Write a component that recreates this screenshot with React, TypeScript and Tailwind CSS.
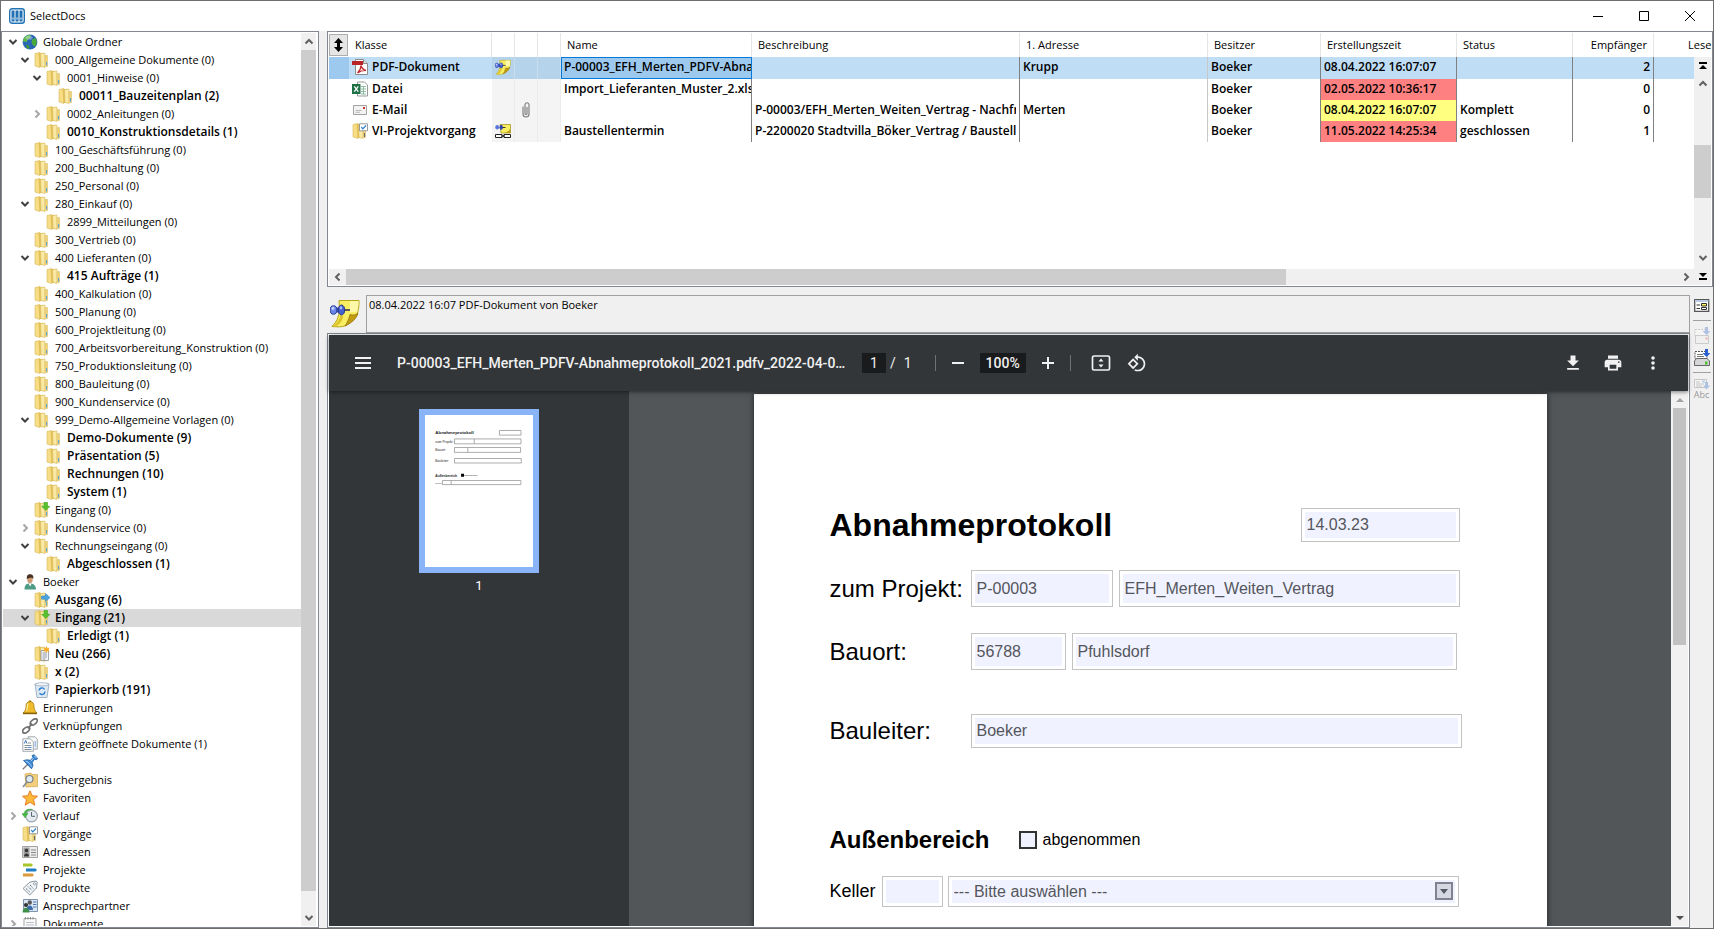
import { useState } from 'react'
import type { ReactNode } from 'react'
import { clsx } from 'clsx'

type IconName =
  | 'folder' | 'folderIn' | 'folderOut' | 'folderNew' | 'folderTask' | 'globe' | 'user' | 'trash'
  | 'bell' | 'link' | 'docs' | 'pin' | 'search' | 'star' | 'history' | 'card' | 'bars' | 'tag'
  | 'people' | 'notepad' | 'pdf' | 'excel' | 'mail' | 'note' | 'noteLink' | 'clip'

type TreeNode = {
  label: string
  level: number
  icon: IconName
  open?: boolean
  closed?: boolean
  bold?: boolean
}

const TREE: TreeNode[] = [
  { label: 'Globale Ordner', level: 0, icon: 'globe', open: true },
  { label: '000_Allgemeine Dokumente (0)', level: 1, icon: 'folder', open: true },
  { label: '0001_Hinweise (0)', level: 2, icon: 'folder', open: true },
  { label: '00011_Bauzeitenplan (2)', level: 3, icon: 'folder', bold: true },
  { label: '0002_Anleitungen (0)', level: 2, icon: 'folder', closed: true },
  { label: '0010_Konstruktionsdetails (1)', level: 2, icon: 'folder', bold: true },
  { label: '100_Geschäftsführung (0)', level: 1, icon: 'folder' },
  { label: '200_Buchhaltung (0)', level: 1, icon: 'folder' },
  { label: '250_Personal (0)', level: 1, icon: 'folder' },
  { label: '280_Einkauf (0)', level: 1, icon: 'folder', open: true },
  { label: '2899_Mitteilungen (0)', level: 2, icon: 'folder' },
  { label: '300_Vertrieb (0)', level: 1, icon: 'folder' },
  { label: '400 Lieferanten (0)', level: 1, icon: 'folder', open: true },
  { label: '415 Aufträge (1)', level: 2, icon: 'folder', bold: true },
  { label: '400_Kalkulation (0)', level: 1, icon: 'folder' },
  { label: '500_Planung (0)', level: 1, icon: 'folder' },
  { label: '600_Projektleitung (0)', level: 1, icon: 'folder' },
  { label: '700_Arbeitsvorbereitung_Konstruktion (0)', level: 1, icon: 'folder' },
  { label: '750_Produktionsleitung (0)', level: 1, icon: 'folder' },
  { label: '800_Bauleitung (0)', level: 1, icon: 'folder' },
  { label: '900_Kundenservice (0)', level: 1, icon: 'folder' },
  { label: '999_Demo-Allgemeine Vorlagen (0)', level: 1, icon: 'folder', open: true },
  { label: 'Demo-Dokumente (9)', level: 2, icon: 'folder', bold: true },
  { label: 'Präsentation (5)', level: 2, icon: 'folder', bold: true },
  { label: 'Rechnungen (10)', level: 2, icon: 'folder', bold: true },
  { label: 'System (1)', level: 2, icon: 'folder', bold: true },
  { label: 'Eingang (0)', level: 1, icon: 'folderIn' },
  { label: 'Kundenservice (0)', level: 1, icon: 'folder', closed: true },
  { label: 'Rechnungseingang (0)', level: 1, icon: 'folder', open: true },
  { label: 'Abgeschlossen (1)', level: 2, icon: 'folder', bold: true },
  { label: 'Boeker', level: 0, icon: 'user', open: true },
  { label: 'Ausgang (6)', level: 1, icon: 'folderOut', bold: true },
  { label: 'Eingang (21)', level: 1, icon: 'folderIn', open: true, bold: true },
  { label: 'Erledigt (1)', level: 2, icon: 'folder', bold: true },
  { label: 'Neu (266)', level: 1, icon: 'folderNew', bold: true },
  { label: 'x (2)', level: 1, icon: 'folder', bold: true },
  { label: 'Papierkorb (191)', level: 1, icon: 'trash', bold: true },
  { label: 'Erinnerungen', level: 0, icon: 'bell' },
  { label: 'Verknüpfungen', level: 0, icon: 'link' },
  { label: 'Extern geöffnete Dokumente (1)', level: 0, icon: 'docs' },
  { label: '', level: 0, icon: 'pin' },
  { label: 'Suchergebnis', level: 0, icon: 'search' },
  { label: 'Favoriten', level: 0, icon: 'star' },
  { label: 'Verlauf', level: 0, icon: 'history', closed: true },
  { label: 'Vorgänge', level: 0, icon: 'folderTask' },
  { label: 'Adressen', level: 0, icon: 'card' },
  { label: 'Projekte', level: 0, icon: 'bars' },
  { label: 'Produkte', level: 0, icon: 'tag' },
  { label: 'Ansprechpartner', level: 0, icon: 'people' },
  { label: 'Dokumente', level: 0, icon: 'notepad', closed: true },
]

type DocRow = {
  icon: IconName
  klasse: string
  note?: IconName
  clip?: boolean
  name: string
  beschreibung: string
  adresse: string
  zeit: string
  zeitColor: string
  status: string
  empfaenger: number
}

const ROWS: DocRow[] = [
  { icon: 'pdf', klasse: 'PDF-Dokument', note: 'note', name: 'P-00003_EFH_Merten_PDFV-Abna', beschreibung: '', adresse: 'Krupp', zeit: '08.04.2022 16:07:07', zeitColor: '', status: '', empfaenger: 2 },
  { icon: 'excel', klasse: 'Datei', name: 'Import_Lieferanten_Muster_2.xls', beschreibung: '', adresse: '', zeit: '02.05.2022 10:36:17', zeitColor: 'bg-[#ff8080]', status: '', empfaenger: 0 },
  { icon: 'mail', klasse: 'E-Mail', clip: true, name: '', beschreibung: 'P-00003/EFH_Merten_Weiten_Vertrag - Nachfr', adresse: 'Merten', zeit: '08.04.2022 16:07:07', zeitColor: 'bg-[#ffff80]', status: 'Komplett', empfaenger: 0 },
  { icon: 'folderTask', klasse: 'VI-Projektvorgang', note: 'noteLink', name: 'Baustellentermin', beschreibung: 'P-2200020 Stadtvilla_Böker_Vertrag / Baustelle', adresse: '', zeit: '11.05.2022 14:25:34', zeitColor: 'bg-[#ff8080]', status: 'geschlossen', empfaenger: 1 },
]

const FolderShape = () => (
  <>
    <path d="M1 1.5 6 .5V15.5L1 14z" fill="#f6dd86" stroke="#d9b95a" strokeWidth=".6" />
    <path d="M4.5 1H9v14H5.5z" fill="#e3c158" />
    <path d="M6.5 1.5 11 1v14.5L7 14.5z" fill="#f9e9a4" stroke="#d9b95a" strokeWidth=".6" />
    <path d="M11.2 3.5h2.3v11h-2.3z" fill="#f0d377" stroke="#d9b95a" strokeWidth=".5" />
    <path d="M12.6 10v3.5" stroke="#4fa3dc" strokeWidth="1" />
  </>
)

const NoteShape = () => (
  <g transform="scale(.533)">
    <path d="M9 2.500h20C29.500 14 26 22 16 27.500 12 29.300 7 29 2 28.500 6.500 24 9 19 9.500 12z" fill="#f8ee62" stroke="#b9a41a" />
    <path d="M20 3h8.500c0 5-.5 8-1.500 11-2.500-.5-5-.5-7 .5z" fill="#fdf9a8" />
    <path d="M28 15.500c-2 6-6.500 9.500-13 12.500 2-3 4-7 5-11.500 3 1 5.500.5 8-1z" fill="#c29c10" stroke="#8a6d08" strokeWidth=".7" />
    <path d="M3 28.300C7 24.500 9.500 21 10.500 17l3 1.500C12 23 9.500 26.500 6 28.600z" fill="#dcc62c" />
    <path d="M13 12h7" stroke="#4a4a55" strokeWidth="1.800" />
    <path d="M3 9.500h8v5H3z" fill="#3a52b8" />
    <ellipse cx="3.500" cy="12" rx="3.300" ry="4.300" fill="#6b86e6" stroke="#2c3f9c" />
    <ellipse cx="11.500" cy="12" rx="3.200" ry="5" fill="#4460cf" stroke="#26388c" />
    <ellipse cx="3" cy="10.300" rx="1.400" ry="1.600" fill="#c5d2fa" />
    <ellipse cx="11" cy="9.800" rx="1.200" ry="1.600" fill="#b3c3f8" />
  </g>
)

const ICONS: Record<IconName, ReactNode> = {
  folder: <FolderShape />,
  folderIn: (
    <>
      <FolderShape />
      <path d="M10 .3h3.500v4H16L11.800 8.500 7.600 4.300H10z" fill="#56c22d" stroke="#3a9a1c" strokeWidth=".5" />
    </>
  ),
  folderOut: (
    <>
      <FolderShape />
      <path d="M7.500 4h4V1.500L16 5.600 11.500 9.700V7.200h-4z" fill="#4aa5e0" stroke="#2b7bb8" strokeWidth=".5" />
    </>
  ),
  folderNew: (
    <>
      <FolderShape />
      <path d="M7 4.500h7.500v10H7z" fill="#f4f6f8" stroke="#8a8f96" strokeWidth=".8" />
      <path d="M8.500 7h4.500M8.500 9h4.500M8.500 11h4.500M8.500 13h3" stroke="#7d8791" strokeWidth=".8" />
      <path d="m12.500 0 .9 2.200 2.300-.6-1.200 2 1.200 2-2.300-.4-.9 1.800-.9-1.800-2.300.4 1.200-2-1.200-2 2.300.6z" fill="#f7a928" />
    </>
  ),
  folderTask: (
    <>
      <FolderShape />
      <path d="M7.500.8h8v7h-8z" fill="#fff" stroke="#8a9096" strokeWidth=".9" />
      <path d="m9.300 4 1.500 1.800L14 2.500" fill="none" stroke="#2c7fc9" strokeWidth="1.200" />
      <path d="M12.500 10v4" stroke="#666" />
    </>
  ),
  globe: (
    <>
      <circle cx="8" cy="8" r="7.400" fill="#2a66b5" />
      <path d="M3 2.800C5 1 7.500.8 9 1.300L8 4 5.500 5.500 5 8 1 7.500C1 5.500 1.700 4 3 2.800z" fill="#5fb84a" />
      <path d="M10 5.500 13.500 4l1.500 4-1.500 4.500-2.500-1-1.500-3z" fill="#4caa3c" />
      <path d="M4 10.500 7 11.500 7.500 14.500 5 14.500z" fill="#3f9c33" />
      <ellipse cx="7" cy="3.800" rx="3.500" ry="2" fill="#fff" opacity=".35" />
    </>
  ),
  user: (
    <>
      <path d="M2.500 15.500c0-4 1.500-5.500 4-6h3c2.800.5 4.500 2.500 4.500 6z" fill="#4e9c86" />
      <path d="m6.500 9.500 1.700 3 1.500-3z" fill="#fff" />
      <ellipse cx="8" cy="5.500" rx="2.700" ry="3.700" fill="#cf9a74" />
      <path d="M4.800 5C4.500 1.500 6 .3 8 .3s4 1.200 3.200 5C10.500 3 8 3.500 4.800 5z" fill="#4a3022" />
    </>
  ),
  trash: (
    <>
      <path d="M1 2h14l-2 13.500H3z" fill="#dce8f2" stroke="#8fa3b5" strokeWidth=".8" />
      <ellipse cx="8" cy="2.300" rx="7" ry="1.600" fill="#f3f7fa" stroke="#8fa3b5" strokeWidth=".7" />
      <path d="M5 8.500a3 3 0 0 1 5.500-1.200M11 9.500a3 3 0 0 1-5.500 1.600" fill="none" stroke="#2b7cd3" strokeWidth="1.400" />
    </>
  ),
  bell: (
    <>
      <path d="M8 1.500c3 0 4 2.500 4 5 0 3 1 4.500 3 6.500H1c2-2 3-3.500 3-6.500 0-2.500 1-5 4-5z" fill="#f0bb2a" stroke="#a5780c" strokeWidth=".8" />
      <path d="M6 3.500c-.8 2-.5 5-1.500 7.500" stroke="#fdeea0" strokeWidth="1.200" fill="none" />
      <path d="M1 13.500h14" stroke="#8a6208" strokeWidth="1.400" />
      <circle cx="8" cy="1.300" r="1" fill="#a5780c" />
    </>
  ),
  link: (
    <g fill="none" stroke="#6f6f6f" strokeWidth="1.700">
      <ellipse cx="11.800" cy="4" rx="4" ry="2.300" transform="rotate(-38 11.800 4)" />
      <ellipse cx="4.200" cy="12" rx="4" ry="2.300" transform="rotate(-38 4.200 12)" />
      <path d="m6 10.500 4-5" />
    </g>
  ),
  docs: (
    <>
      <path d="M6 .8h7l2.300 2.300v10H6z" fill="#f7f9fb" stroke="#8d949b" strokeWidth=".8" />
      <path d="M.8 2.800h7.500l3 3v9.500H.8z" fill="#fff" stroke="#8d949b" strokeWidth=".8" />
      <path d="m2.300 7.500 1.400-3 1.300 3" fill="none" stroke="#2d6fc1" />
      <path d="M6 7h3M2.500 9.500h7M2.500 11.500h3M2.500 13.500h7" stroke="#77818b" strokeWidth=".9" />
      <path d="M6 11.500h3.500M12.500 6H14M12.500 8H14M12.500 10H14" stroke="#4a90d9" />
    </>
  ),
  pin: (
    <>
      <path d="m.8 15.200 5-5" stroke="#7c7c7c" strokeWidth="1.300" />
      <path d="m1.500 6.500 3.500-.7 3.500.5 2.500-3-1-1.800L12 .7 15.500 4l-.8 1.700-2.200-.4-2.300 3.200.8 3-1.500 3.300z" fill="#3f8ad6" stroke="#1f5a9c" strokeWidth=".8" />
      <path d="M3.500 7c2 .3 5 2.800 6 5.500M12.500 2l2 2M9 7l2.500-3" stroke="#a9d2f5" strokeWidth="1" fill="none" />
    </>
  ),
  search: (
    <>
      <path d="M3 2 9 1l1 1.500h5.500v12L4 15z" fill="#f2cf7c" stroke="#cc9c42" strokeWidth=".6" />
      <circle cx="7.500" cy="7" r="3.500" fill="#dcebf5" stroke="#7a7f85" strokeWidth="1.200" />
      <path d="m5 10-4 5" stroke="#8a8f95" strokeWidth="1.700" />
    </>
  ),
  star: (
    <path d="m8 .8 2.200 4.900 5.300.5-4 3.500 1.300 5.500L8 12.300 3.200 15.200l1.300-5.500-4-3.500 5.300-.5z" fill="#fcb93a" stroke="#e2741b" strokeWidth=".9" />
  ),
  history: (
    <>
      <circle cx="9.500" cy="8" r="5.900" fill="#e4ebf0" stroke="#98a2aa" strokeWidth="1.200" />
      <path d="M9.500 4v4.300h3.500" fill="none" stroke="#5c6770" />
      <path d="M10.500 1.500C7 1 4.500 2.800 3.800 5.500H6L3 9.800-.2 5.500H2C2.800 2 6 .3 10.500 1.500z" fill="#44b944" stroke="#2d9332" strokeWidth=".4" />
    </>
  ),
  card: (
    <>
      <path d="M.5 2.500h15v11H.5z" fill="#ececec" stroke="#a3a3a3" />
      <path d="M1.500 3.500h6v9h-6z" fill="#9c9c9c" />
      <circle cx="4.500" cy="6.500" r="1.700" fill="#333" />
      <path d="M2 12.500c0-4 5-4 5 0z" fill="#333" />
      <path d="M9 6h5M9 8.500h5M9 11h5" stroke="#888" />
    </>
  ),
  bars: (
    <>
      <path d="M1 1.500h8.500l1.500 1.500-1.500 1.500H1z" fill="#a9c62a" />
      <path d="M4 6.500h9.500L15 8l-1.500 1.500H4z" fill="#1f7dc4" />
      <path d="M1 11.500h9.500L12 13l-1.500 1.500H1z" fill="#dc9a3a" />
    </>
  ),
  tag: (
    <>
      <path d="m1 8.500 7-6.500 6-1 1.200 1.200L14.500 8l-6.700 7z" fill="#f0f4f7" stroke="#7f8c98" strokeWidth=".9" />
      <circle cx="12.500" cy="3.800" r="1.100" fill="#fff" stroke="#7f8c98" strokeWidth=".7" />
      <path d="M4 8.500 7.700 12M6 6.500l3.700 3.700M8 5l3.300 3.500" stroke="#56636f" strokeDasharray="1.300 .8" />
    </>
  ),
  people: (
    <>
      <path d="M1.500 1.500h14v12h-14z" fill="#dbe6f4" stroke="#7e93ad" />
      <path d="M11 4h3.500M11 6.500h3.500M11 9h3.500" stroke="#4b78b5" />
      <circle cx="7.800" cy="4.500" r="2.200" fill="#5a5a5a" />
      <path d="M4.500 12c0-6 6.500-6 6.500 0z" fill="#3c6cab" />
      <circle cx="4" cy="7" r="2.100" fill="#333" />
      <path d="M.5 14.500c0-6.500 7-6.500 7 0z" fill="#3f8f4a" />
    </>
  ),
  notepad: (
    <>
      <path d="M2 2.500h12v13H2z" fill="#fafafa" stroke="#a5a5a5" />
      <path d="M3.500 1v2.500M6 1v2.500M8.500 1v2.500M11 1v2.500" stroke="#8b8b8b" />
      <path d="M4 6.500h8M4 9h8M4 11.500h8" stroke="#b8c0c8" />
    </>
  ),
  pdf: (
    <>
      <path d="M3.500.5h8l4 4v11h-12z" fill="#fff" stroke="#8d8d8d" />
      <path d="M11.500.5v4h4" fill="#ddd" stroke="#8d8d8d" />
      <path d="M0 2h11v4H0z" fill="#b9242a" />
      <path d="M5.500 14c2-2 3.500-5 3.500-7.500 1 3 2.500 4.500 5 5-3-.2-6 .8-8.500 2.500z" fill="none" stroke="#c22b2f" strokeWidth="1.300" />
    </>
  ),
  excel: (
    <>
      <path d="M5.500 1h7l3 3v11h-10z" fill="#fff" stroke="#9a9a9a" />
      <path d="M9 5.500h5M9 8h5M9 10.500h5M9 13h5M11.500 5v8.500" stroke="#86b79a" strokeWidth=".9" />
      <path d="M0 3h8.500v10H0z" fill="#1e7145" />
      <path d="m2.300 5.300 4 5.400M6.300 5.300l-4 5.400" stroke="#fff" strokeWidth="1.300" />
    </>
  ),
  mail: (
    <>
      <path d="M1.500 3.500h13v9h-13z" fill="#f3f3f3" stroke="#a2a2a2" />
      <path d="M11 5h2v2h-2z" fill="#d8342c" />
      <path d="M3.500 8.500h6M3.500 10.300h4.500" stroke="#bbb" />
    </>
  ),
  note: <NoteShape />,
  noteLink: (
    <>
      <path d="M5 1.500h10.500V10H6z" fill="#f8ee62" stroke="#a08a10" strokeWidth=".7" />
      <path d="M15 6c-1 2-3 3.500-6 4h6z" fill="#c29c10" />
      <path d="M7 4.500h3.500" stroke="#333" />
      <ellipse cx="2.200" cy="4.200" rx="1.900" ry="2.200" fill="#5a78dc" />
      <ellipse cx="6.200" cy="4.200" rx="1.700" ry="2.500" fill="#2b46ae" />
      <path d="M.5 11.500h6.500v3H.5zM9 11.500h6.500v3H9z" fill="#fff" stroke="#222" />
      <path d="M6.500 13h3" stroke="#222" strokeWidth="1.500" />
    </>
  ),
  clip: (
    <path d="M5 4.500v7.500c0 4 6 4 6 0V3c0-3-4-3-4 0v8.500c0 1.300 2 1.300 2 0V5" fill="none" stroke="#808080" strokeWidth="1.200" />
  ),
}

function Icon({ name, size = 16 }: { name: IconName; size?: number }) {
  return (
    <svg width={size} height={size} viewBox="0 0 16 16" className="shrink-0" aria-hidden="true">
      {ICONS[name]}
    </svg>
  )
}

const CHEVRONS = {
  up: 'M1.500 6.500 5 3l3.500 3.500',
  down: 'M1.500 3 5 6.500 8.500 3',
  left: 'M6.500 1.500 3 5l3.500 3.500',
  right: 'M3.500 1.500 7 5 3.500 8.500',
}

function Chevron({ dir, className }: { dir: keyof typeof CHEVRONS; className?: string }) {
  return (
    <svg width="10" height="10" viewBox="0 0 10 10" className={clsx('shrink-0', className)} aria-hidden="true">
      <path d={CHEVRONS[dir]} fill="none" stroke="currentColor" strokeWidth="2" />
    </svg>
  )
}

function TitleBar() {
  return (
    <header className="flex h-[31px] shrink-0 items-center border-t border-[#6d6d72] bg-white pl-2">
      <svg width="16" height="16" viewBox="0 0 16 16" aria-hidden="true">
        <rect x=".7" y=".7" width="14.600" height="14.600" rx="2.500" fill="#fff" stroke="#2272b4" strokeWidth="1.400" />
        <path d="M2.500 2.500h3v11h-3zM6.500 2.500h3v11h-3zM10.500 2.500h3v11h-3z" fill="#1f6fb2" />
        <path d="M4 9.500v2M8 9.500v2M12 9.500v2" stroke="#fff" />
      </svg>
      <h1 className="ml-[5px] text-[11px]">SelectDocs</h1>
      <div className="ml-auto flex h-full">
        <button aria-label="Minimieren" className="flex w-[46px] items-center justify-center">
          <svg width="10" height="10" viewBox="0 0 10 10"><path d="M0 5.500h10" stroke="#000" /></svg>
        </button>
        <button aria-label="Maximieren" className="flex w-[46px] items-center justify-center">
          <svg width="10" height="10" viewBox="0 0 10 10"><path d="M.5.5h9v9h-9z" fill="none" stroke="#000" /></svg>
        </button>
        <button aria-label="Schließen" className="flex w-[46px] items-center justify-center">
          <svg width="10" height="10" viewBox="0 0 10 10"><path d="m0 0 10 10M10 0 0 10" stroke="#000" /></svg>
        </button>
      </div>
    </header>
  )
}

function FolderTree() {
  const [selected, setSelected] = useState('Eingang (21)')

  return (
    <nav aria-label="Ordner" className="flex w-[318px] shrink-0 border border-[#828790] bg-white p-px pr-[2px]">
      <ul className="min-w-0 flex-1 overflow-hidden">
        {TREE.map((node) => (
          <li key={node.label + node.level}>
            <button
              onClick={() => setSelected(node.label)}
              aria-label={node.label || 'Angeheftet'}
              className={clsx(
                'flex h-[18px] w-full items-center pl-[5px] text-left whitespace-nowrap',
                node.bold ? 'text-[12px] font-semibold' : 'text-[11px]',
                selected === node.label && 'bg-[#d9d9d9]',
              )}
            >
              <span className="shrink-0" style={{ width: node.level * 12 }} />
              <span className="mr-1 w-[10px] shrink-0">
                {node.open && <Chevron dir="down" className="text-[#404040]" />}
                {node.closed && <Chevron dir="right" className="text-[#a6a6a6]" />}
              </span>
              <Icon name={node.icon} />
              <span className="ml-[5px]">{node.label}</span>
            </button>
          </li>
        ))}
      </ul>
      <div className="flex w-[15px] flex-col items-center bg-[#f0f0f0] text-[#606060]">
        <button aria-label="Nach oben" className="flex h-[17px] items-center"><Chevron dir="up" /></button>
        <div className="mb-[18px] w-full flex-1 bg-[#cdcdcd]" />
        <button aria-label="Nach unten" className="flex h-[17px] items-center"><Chevron dir="down" /></button>
      </div>
    </nav>
  )
}

const HEAD = 'h-6 overflow-hidden border-r border-[#e5e5e5] px-[6px] text-left font-normal'
const CELL = 'h-[21px] overflow-hidden px-[3px] pb-[2px]'

function DocumentTable() {
  return (
    <section className="relative h-[256px] shrink-0 overflow-hidden border border-[#828790] bg-white p-px">
      <table className="w-full table-fixed border-separate border-spacing-0 whitespace-nowrap">
        <colgroup>
          <col className="w-[20px]" />
          <col className="w-[143px]" />
          <col className="w-[23px]" />
          <col className="w-[23px]" />
          <col className="w-[23px]" />
          <col className="w-[191px]" />
          <col className="w-[268px]" />
          <col className="w-[188px]" />
          <col className="w-[113px]" />
          <col className="w-[136px]" />
          <col className="w-[116px]" />
          <col className="w-[81px]" />
          <col />
        </colgroup>
        <thead className="text-[11px]">
          <tr>
            <th className="p-0">
              <button aria-label="Sortierung" className="flex h-[22px] w-[19px] items-center justify-center border border-[#adadad] bg-[#e5e5e5]">
                <svg width="11" height="14" viewBox="0 0 11 14">
                  <path d="M5.500 0 10 5H7v4h3l-4.500 5L1 9h3V5H1z" fill="#000" />
                </svg>
              </button>
            </th>
            <th className={HEAD}>Klasse</th>
            <th className={HEAD} />
            <th className={HEAD} />
            <th className={HEAD} />
            <th className={HEAD}>Name</th>
            <th className={HEAD}>Beschreibung</th>
            <th className={HEAD}>1. Adresse</th>
            <th className={HEAD}>Besitzer</th>
            <th className={HEAD}>Erstellungszeit</th>
            <th className={HEAD}>Status</th>
            <th className={clsx(HEAD, 'text-right')}>Empfänger</th>
            <th className="pl-[34px] text-left font-normal">Lese</th>
          </tr>
        </thead>
        <tbody className="text-[12px] font-semibold">
          {ROWS.map((row, i) => {
            const active = i === 0
            const iconCell = active ? 'border-r border-[#c9dcec] bg-[#b5d3ea]' : 'border-r border-[#ececec] bg-[#f4f4f4]'
            return (
              <tr key={row.klasse} className={active ? 'bg-[#bfddf5]' : ''}>
                <td className={active ? 'bg-[#9dc9ef]' : ''} />
                <td className={CELL}>
                  <span className="flex items-center gap-[4px]">
                    <Icon name={row.icon} />
                    {row.klasse}
                  </span>
                </td>
                <td className={clsx(CELL, iconCell)}>{row.note && <Icon name={row.note} />}</td>
                <td className={clsx(CELL, iconCell)}>{row.clip && <Icon name="clip" />}</td>
                <td className={iconCell} />
                <td className={active ? 'h-[21px] border border-[#0078d7] bg-[#9dc9ef] pb-[2px] pl-[2px]' : 'h-[21px] border-r border-[#808080] pb-[2px] pl-[3px]'}>
                  <div className="overflow-hidden">{row.name}</div>
                </td>
                <td className={clsx(CELL, 'border-r border-[#808080]')}>
                  <div className="overflow-hidden">{row.beschreibung}</div>
                </td>
                <td className={clsx(CELL, 'border-r border-[#c8c8c8]')}>{row.adresse}</td>
                <td className={clsx(CELL, 'border-r border-[#808080]')}>Boeker</td>
                <td className={clsx(CELL, 'border-r border-[#808080]', row.zeitColor)}>{row.zeit}</td>
                <td className={clsx(CELL, 'border-r border-[#808080]')}>{row.status}</td>
                <td className={clsx(CELL, 'border-r border-[#808080] text-right')}>{row.empfaenger}</td>
                <td />
              </tr>
            )
          })}
        </tbody>
      </table>

      {/* vertical scrollbar, sits over the right end of the rows */}
      <div className="absolute top-[25px] right-px bottom-px flex w-[17px] flex-col items-center bg-[#f0f0f0] text-[#606060]">
        <button aria-label="Zum Anfang" className="flex h-[18px] items-center text-black">
          <svg width="8" height="8" viewBox="0 0 8 8"><path d="M0 0h8v2H0zM4 3l4 4H0z" fill="currentColor" /></svg>
        </button>
        <button aria-label="Nach oben" className="flex h-[18px] items-center"><Chevron dir="up" /></button>
        <div className="mt-[52px] h-[53px] w-full bg-[#cdcdcd]" />
        <div className="flex-1" />
        <button aria-label="Nach unten" className="flex h-[18px] items-center"><Chevron dir="down" /></button>
        <button aria-label="Zum Ende" className="flex h-[18px] items-center text-black">
          <svg width="8" height="8" viewBox="0 0 8 8"><path d="M0 6h8v2H0zM4 5l4-4H0z" fill="currentColor" /></svg>
        </button>
      </div>

      {/* horizontal scrollbar */}
      <div className="absolute right-[18px] bottom-px left-px flex h-[16px] items-center bg-[#f0f0f0] text-[#606060]">
        <button aria-label="Nach links" className="flex w-[17px] justify-center"><Chevron dir="left" /></button>
        <div className="h-full flex-1">
          <div className="h-full w-12/17 bg-[#cdcdcd]" />
        </div>
        <button aria-label="Nach rechts" className="flex w-[17px] justify-center"><Chevron dir="right" /></button>
      </div>
    </section>
  )
}

function PdfToolbar() {
  return (
    <div className="relative z-10 flex h-14 shrink-0 items-center bg-[#323639] pr-[25px] pl-[24px] text-[#f1f1f1] shadow-[0_1px_4px_rgba(0,0,0,0.5)]">
      <button aria-label="Menü">
        <svg width="20" height="20" viewBox="0 0 20 20"><path d="M2 5h16M2 10h16M2 15h16" stroke="currentColor" strokeWidth="2" /></svg>
      </button>
      <span className="ml-[24px] w-[450px] truncate font-[Roboto] text-[14px] font-medium">
        P-00003_EFH_Merten_PDFV-Abnahmeprotokoll_2021.pdfv_2022-04-0…
      </span>
      <div className="ml-[15px] flex items-center font-[Roboto] text-[14px]">
        <input aria-label="Seite" defaultValue="1" className="h-5 w-6 bg-[#191b1c] text-center" />
        <span className="ml-[4px]">/</span>
        <span className="ml-[8px]">1</span>
      </div>
      <span className="ml-[23px] h-4 w-px bg-[#6f7274]" />
      <button aria-label="Verkleinern" className="ml-[14px]">
        <svg width="16" height="16" viewBox="0 0 16 16"><path d="M2 8h12" stroke="currentColor" strokeWidth="2" /></svg>
      </button>
      <input aria-label="Zoom" defaultValue="100%" className="ml-[14px] h-5 w-[46px] bg-[#191b1c] text-center font-[Roboto] text-[14px] font-medium" />
      <button aria-label="Vergrößern" className="ml-[14px]">
        <svg width="16" height="16" viewBox="0 0 16 16"><path d="M2 8h12M8 2v12" stroke="currentColor" strokeWidth="2" /></svg>
      </button>
      <span className="ml-[14px] h-4 w-px bg-[#6f7274]" />
      <button aria-label="An Seite anpassen" className="ml-[20px]">
        <svg width="20" height="20" viewBox="0 0 20 20">
          <rect x="1.500" y="3" width="17" height="14" rx="1.500" fill="none" stroke="currentColor" strokeWidth="1.700" />
          <path d="M10 5.500 12.500 8.500h-5zM10 14.500 7.500 11.500h5z" fill="currentColor" />
        </svg>
      </button>
      <button aria-label="Drehen" className="ml-[16px]">
        <svg width="20" height="20" viewBox="0 0 24 24" fill="currentColor">
          <path d="M7.340 6.410.860 12.900l6.490 6.480 6.490-6.480-6.500-6.490zM3.690 12.900l3.660-3.660L11 12.900l-3.660 3.660-3.650-3.660zm15.670-6.260A8.950 8.950 0 0 0 13 4V.760L8.760 5 13 9.240V6c1.790 0 3.580.680 4.950 2.050a7.007 7.007 0 0 1 0 9.900 6.973 6.973 0 0 1-7.790 1.440l-1.490 1.490C10.020 21.620 11.510 22 13 22c2.300 0 4.610-.880 6.360-2.640a8.980 8.980 0 0 0 0-12.720z" />
        </svg>
      </button>
      <div className="ml-auto flex items-center gap-[20px]">
        <button aria-label="Herunterladen">
          <svg width="20" height="20" viewBox="0 0 24 24" fill="currentColor"><path d="M19 9h-4V3H9v6H5l7 7 7-7zM5 18v2h14v-2H5z" /></svg>
        </button>
        <button aria-label="Drucken">
          <svg width="20" height="20" viewBox="0 0 24 24" fill="currentColor"><path d="M19 8H5c-1.660 0-3 1.340-3 3v6h4v4h12v-4h4v-6c0-1.660-1.340-3-3-3zm-3 11H8v-5h8v5zm3-7c-.55 0-1-.45-1-1s.45-1 1-1 1 .45 1 1-.45 1-1 1zm-1-9H6v4h12V3z" /></svg>
        </button>
        <button aria-label="Weitere Aktionen">
          <svg width="20" height="20" viewBox="0 0 20 20" fill="currentColor"><circle cx="10" cy="5" r="1.800" /><circle cx="10" cy="10" r="1.800" /><circle cx="10" cy="15" r="1.800" /></svg>
        </button>
      </div>
    </div>
  )
}

// Miniature of the page, drawn in page coordinates
function Thumbnail() {
  return (
    <button className="mt-[18px] border-[6px] border-[#8ab4f8] bg-white" aria-label="Seite 1">
      <svg width="108" height="152" viewBox="0 0 794 1118">
        <g fill="#222" fontFamily="Liberation Sans">
          <text x="76" y="142" fontSize="32" fontWeight="700">Abnahmeprotokoll</text>
          <text x="76" y="203" fontSize="24">zum Projekt:</text>
          <text x="76" y="266" fontSize="24">Bauort:</text>
          <text x="76" y="345" fontSize="24">Bauleiter:</text>
          <text x="76" y="455" fontSize="24" fontWeight="700">Außenbereich</text>
          <text x="288" y="451" fontSize="16">abgenommen</text>
          <text x="76" y="504" fontSize="18">Keller</text>
        </g>
        <g fill="#fff" stroke="#999" strokeWidth="6">
          <path d="M547 114h159v34H547zM217 176h489v36H217zM217 239h486v36H217zM217 320h491v33H217zM128 482h577v30H128z" />
          <path d="M362 176v36M315 239v36M192 482v30" />
        </g>
        <path d="M270 438h12v12h-12z" fill="#fff" stroke="#000" strokeWidth="10" />
      </svg>
    </button>
  )
}

function Field({ id, label, value, className }: { id: string; label?: string; value: string; className: string }) {
  return (
    <div className={clsx('border border-[#c3c3c3] p-[3px]', className)}>
      <input id={id} aria-label={label} defaultValue={value} className="block h-full w-full bg-[#f0f3ff] px-[2px] text-[16px] text-[#55565c]" />
    </div>
  )
}

function FormPage() {
  return (
    <form className="mt-[3px] h-[1123px] w-[793px] shrink-0 bg-white pt-[114px] pl-[76px] font-['Liberation_Sans',sans-serif] text-black shadow-[0_0_6px_rgba(0,0,0,0.6)]">
      <div className="flex w-[630px] items-center justify-between">
        <h2 className="text-[32px] leading-[34px] font-bold">Abnahmeprotokoll</h2>
        <Field id="datum" label="Datum" value="14.03.23" className="h-[34px] w-[159px]" />
      </div>
      <div className="mt-[28px] flex items-center">
        <label htmlFor="projekt" className="w-[141px] text-[24px] leading-[37px]">zum Projekt:</label>
        <Field id="projekt" value="P-00003" className="h-[37px] w-[142px]" />
        <Field id="projektname" label="Projektname" value="EFH_Merten_Weiten_Vertrag" className="ml-[6px] h-[37px] w-[341px]" />
      </div>
      <div className="mt-[26px] flex items-center">
        <label htmlFor="bauort" className="w-[141px] text-[24px] leading-[37px]">Bauort:</label>
        <Field id="bauort" value="56788" className="h-[37px] w-[95px]" />
        <Field id="ort" label="Ort" value="Pfuhlsdorf" className="ml-[6px] h-[37px] w-[385px]" />
      </div>
      <div className="mt-[44px] flex items-center">
        <label htmlFor="bauleiter" className="w-[141px] text-[24px] leading-[34px]">Bauleiter:</label>
        <Field id="bauleiter" value="Boeker" className="h-[34px] w-[491px]" />
      </div>
      <div className="mt-[76px] flex items-center">
        <h3 className="text-[24px] leading-[32px] font-bold">Außenbereich</h3>
        <input id="abgenommen" type="checkbox" className="ml-[29px] size-[18px] appearance-none border-2 border-[#333] bg-[#f0f3ff]" />
        <label htmlFor="abgenommen" className="ml-[6px] text-[16px]">abgenommen</label>
      </div>
      <div className="mt-[20px] flex items-center">
        <label htmlFor="keller" className="w-[52px] text-[18px]">Keller</label>
        <Field id="keller" value="" className="h-[31px] w-[61px]" />
        <div className="relative ml-[5px] h-[31px] w-[511px] border border-[#c3c3c3] p-[3px]">
          <select aria-label="Keller Auswahl" className="block h-full w-full appearance-none bg-[#f0f3ff] px-[2px] text-[16px] text-[#55565c]">
            <option>--- Bitte auswählen ---</option>
          </select>
          <span className="pointer-events-none absolute top-[5px] right-[5px] flex size-[18px] items-center justify-center border-2 border-[#80838f] bg-[#d5d8e2]">
            <svg width="8" height="5" viewBox="0 0 8 5"><path d="M0 0h8L4 5z" fill="#555a66" /></svg>
          </span>
        </div>
      </div>
    </form>
  )
}

function PdfViewer() {
  return (
    <div className="flex min-h-0 flex-1 flex-col border border-[#828790] bg-white p-px">
      <PdfToolbar />
      <div className="flex min-h-0 flex-1">
        <aside className="flex w-[300px] shrink-0 flex-col items-center bg-[#323639]">
          <Thumbnail />
          <span className="mt-[5px] font-[Roboto] text-[13px] leading-4 text-white">1</span>
        </aside>
        <div className="flex min-w-0 flex-1 justify-center overflow-hidden bg-[#525659]">
          <FormPage />
        </div>
        <div className="flex w-[17px] shrink-0 flex-col items-center bg-[#f1f1f1] text-[#a3a3a3]">
          <button aria-label="Nach oben" className="flex h-[17px] items-center">
            <svg width="8" height="4" viewBox="0 0 8 4"><path d="M0 4h8L4 0z" fill="currentColor" /></svg>
          </button>
          <div className="h-[237px] w-[13px] bg-[#c1c1c1]" />
          <button aria-label="Nach unten" className="mt-auto flex h-[17px] items-center text-[#505050]">
            <svg width="8" height="4" viewBox="0 0 8 4"><path d="M0 0h8L4 4z" fill="currentColor" /></svg>
          </button>
        </div>
      </div>
    </div>
  )
}

function SideTools() {
  return (
    <div className="flex w-[23px] shrink-0 flex-col items-center pt-[3px]">
      <button aria-label="Formular">
        <svg width="16" height="16" viewBox="0 0 16 16">
          <path d="M.7 1.700h14v11.600H.7z" fill="#fff" stroke="#555" strokeWidth="1.300" />
          <path d="M1 2h13.500v2H1z" fill="#b9cbe4" />
          <path d="M2.500 7H6M2.500 10.500H6" stroke="#333" />
          <path d="M7.500 5.500h5v2.500h-5z" fill="#fbf25a" stroke="#333" />
          <path d="M7.500 9.500h5v2h-5z" fill="#fff" stroke="#333" />
        </svg>
      </button>
      <span className="mt-[6px] h-px w-[18px] bg-[#a0a0a0]" />
      <button aria-label="E-Mail speichern" className="mt-[6px] opacity-35">
        <svg width="16" height="18" viewBox="0 0 16 18">
          <path d="M1 2.500h12V9H1z" fill="#fff" stroke="#888" strokeDasharray="2 1" />
          <path d="M1.500 8.500h13v8h-13z" fill="#f2f2f2" stroke="#888" />
          <path d="M11.500 10.500h2v2h-2z" fill="#d33" />
          <path d="M11 0h3v4h2.500l-4 4-4-4H11z" fill="#3a6fd0" />
        </svg>
      </button>
      <button aria-label="Auf Datenträger speichern" className="mt-[4px]">
        <svg width="16" height="18" viewBox="0 0 16 18">
          <path d="M1 2.500h12V10H1z" fill="#fff" stroke="#555" strokeDasharray="2 1" />
          <path d="M3 5.500h6M3 7.500h7" stroke="#777" />
          <path d="m2.500 9.500h10.500l2.500 2.500v4.500H.5V12z" fill="#d5d5d8" stroke="#666" />
          <path d="M11 12.500h2.500v3H11z" fill="#4cc22f" />
          <path d="M11 0h3v4h2.500l-4 4-4-4H11z" fill="#2a5fd0" />
        </svg>
      </button>
      <span className="mt-[5px] h-px w-[18px] bg-[#a0a0a0]" />
      <button aria-label="Text" className="mt-[6px] flex flex-col items-center opacity-50">
        <svg width="16" height="11" viewBox="0 0 16 11">
          <path d="M.5.5h12v8H.5z" fill="#fff" stroke="#999" />
          <path d="M2 3h4M2 5h8M2 7h6" stroke="#999" />
          <path d="M8 1.500h3v2H8z" fill="#7db4e6" />
          <path d="M11 3h3v3.500h2L12.500 10.500 9 6.500h2z" fill="#6a96d8" />
        </svg>
        <span className="text-[9px] leading-[9px] text-[#444]">Abc</span>
      </button>
    </div>
  )
}

export default function App() {
  return (
    <div className="flex h-screen flex-col overflow-hidden border-x border-[#6d6d72] bg-[#f0f0f0] font-['Open_Sans','Noto_Sans',sans-serif] text-black">
      <TitleBar />
      <div className="flex min-h-0 flex-1 gap-2 border-b border-[#6d6d72]">
        <FolderTree />
        <main className="flex min-w-0 flex-1 flex-col">
          <DocumentTable />
          <div className="mt-2 flex min-h-0 flex-1">
            <div className="flex min-w-0 flex-1 flex-col">
              <div className="flex h-[38px] shrink-0 items-start">
                <span className="mt-[3px] ml-[3px] w-[36px]"><Icon name="note" size={30} /></span>
                <p className="h-full flex-1 border border-[#a0a0a0] px-[2px] text-[11px] leading-[18px]">
                  08.04.2022 16:07 PDF-Dokument von Boeker
                </p>
              </div>
              <PdfViewer />
            </div>
            <SideTools />
          </div>
        </main>
      </div>
    </div>
  )
}
